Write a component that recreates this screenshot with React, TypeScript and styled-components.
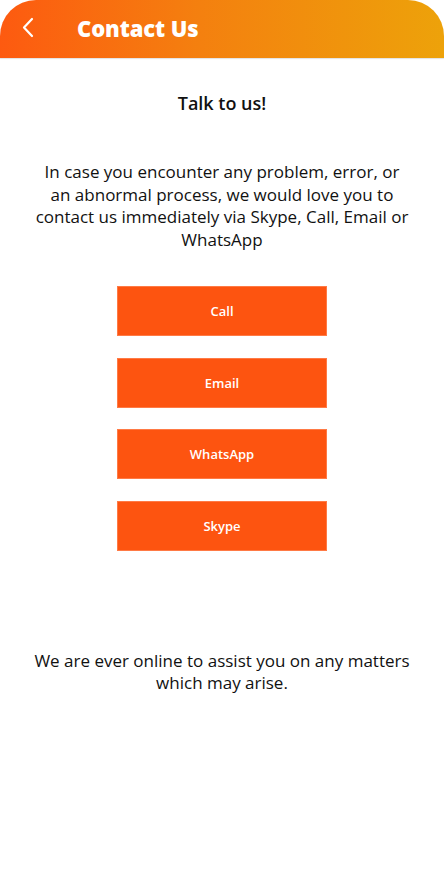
import React from "react";
import styled, { createGlobalStyle } from "styled-components";

const Global = createGlobalStyle`
  html, body { margin: 0; padding: 0; background: #ffffff; }
  body { font-family: "Open Sans", "Noto Sans", sans-serif; color: #111111; }
  * { box-sizing: border-box; }
`;

const Page = styled.div`
  width: 444px;
  min-height: 888px;
  background: #ffffff;
  display: flex;
  flex-direction: column;
`;

const Header = styled.header`
  height: 58px;
  border-radius: 36px 36px 0 0;
  background: linear-gradient(90deg, #fd5a10 0%, #f4800f 45%, #eda20a 100%);
  display: flex;
  align-items: center;
  padding-left: 20px;
  padding-bottom: 3px;
  box-shadow: 0 1px 1px rgba(0, 0, 0, 0.12);
`;

const BackButton = styled.button`
  width: 16px;
  height: 24px;
  padding: 0;
  border: none;
  background: transparent;
  display: flex;
  align-items: center;
  justify-content: center;
  margin-right: 41px;
`;

const Title = styled.h1`
  margin: 0;
  font-family: "Open Sans", sans-serif;
  font-weight: 800;
  font-size: 22px;
  color: #ffffff;
  letter-spacing: -0.1px;
`;

const Content = styled.main`
  display: flex;
  flex-direction: column;
  align-items: center;
  padding: 0 20px;
`;

const Heading = styled.h2`
  margin: 33px 0 0;
  font-size: 18px;
  font-weight: 600;
  line-height: 24px;
  color: #111111;
`;

const Paragraph = styled.p<{ $top: number }>`
  margin: ${(p) => p.$top}px 0 0;
  font-size: 17px;
  font-weight: 400;
  line-height: 22.5px;
  text-align: center;
  color: #111111;
`;

const ButtonList = styled.div`
  display: flex;
  flex-direction: column;
  gap: 21.5px;
  margin-top: 35px;
`;

const ActionButton = styled.button`
  width: 210px;
  height: 50px;
  background: #fd5410;
  border: 1px solid #ff7a45;
  color: #ffffff;
  font-family: "Open Sans", sans-serif;
  font-weight: 600;
  font-size: 13px;
  display: flex;
  align-items: center;
  justify-content: center;
  padding: 0;
`;

const Chevron = () => (
  <svg width="12" height="21" viewBox="0 0 12 21" fill="none">
    <path d="M10 2 L2 10.5 L10 19" stroke="#ffffff" strokeWidth="2.2" strokeLinecap="round" strokeLinejoin="round" />
  </svg>
);

export default function App() {
  return (
    <Page>
      <Global />
      <Header>
        <BackButton aria-label="Back">
          <Chevron />
        </BackButton>
        <Title>Contact Us</Title>
      </Header>
      <Content>
        <Heading>Talk to us!</Heading>
        <Paragraph $top={46}>
          In case you encounter any problem, error, or
          <br />
          an abnormal process, we would love you to
          <br />
          contact us immediately via Skype, Call, Email or
          <br />
          WhatsApp
        </Paragraph>
        <ButtonList>
          {["Call", "Email", "WhatsApp", "Skype"].map((label) => (
            <ActionButton key={label}>{label}</ActionButton>
          ))}
        </ButtonList>
        <Paragraph $top={99}>
          We are ever online to assist you on any matters
          <br />
          which may arise.
        </Paragraph>
      </Content>
    </Page>
  );
}
